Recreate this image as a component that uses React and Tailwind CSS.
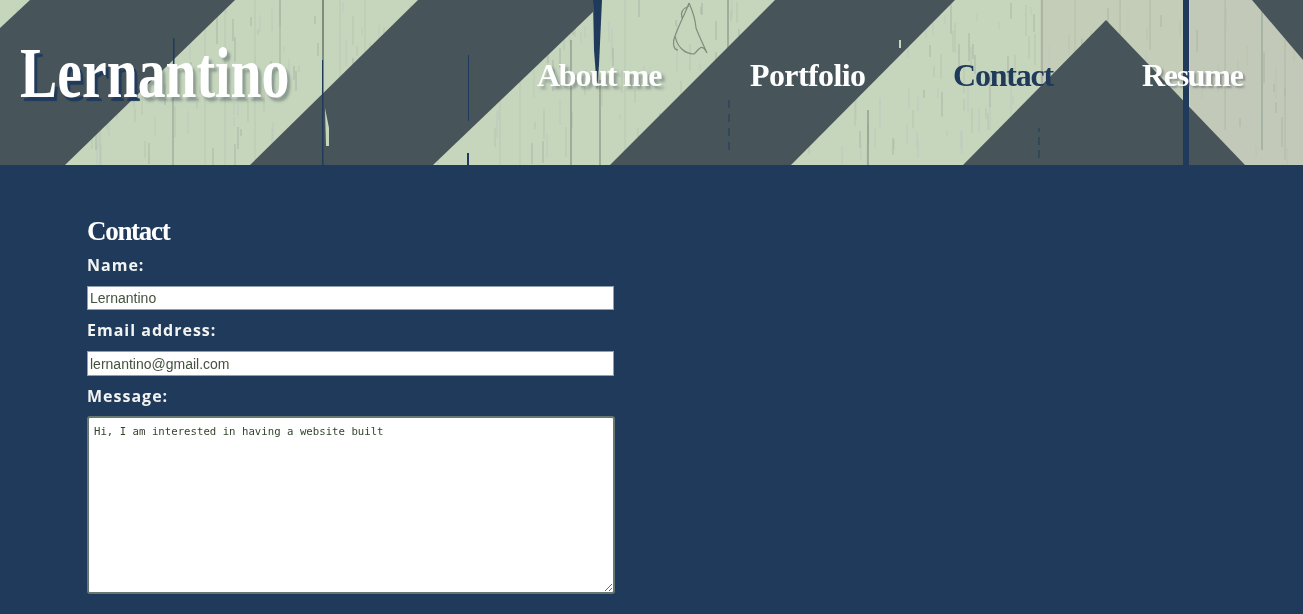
import React from "react";

const SERIF = "font-['Liberation_Serif',serif]";

function grain() {
  const out = [];
  let s = 17;
  const rnd = () => {
    s = (s * 9301 + 49297) % 233280;
    return s / 233280;
  };
  for (let i = 0; i < 420; i++) {
    const x = Math.round(rnd() * 1303);
    const y = Math.round(rnd() * 150);
    const h = 6 + Math.round(rnd() * 26);
    const tone = rnd();
    out.push([x, y, h, tone < 0.25 ? "#a9b6a5" : tone < 0.6 ? "#b8c4ad" : "#bcc9c0"]);
  }
  return out;
}

function Backdrop() {
  const planks = [
    [100,0,100,165,"#b4c2ab"],[173,0,173,165,"#8f9d90"],[205,0,205,165,"#bac8b1"],[225,0,225,165,"#bac8b1"],[255,0,255,165,"#bac8b1"],[280,0,280,70,"#a3b09c"],
    [340,0,340,90,"#bac8b1"],[365,0,365,70,"#bac8b1"],[500,90,500,165,"#bac8b1"],[520,60,520,165,"#bac8b1"],[571,40,571,165,"#76857a"],[600,80,600,165,"#76857a"],
    [625,0,625,165,"#bac8b1"],[728,0,728,50,"#76857a"],[868,110,868,165,"#76857a"],[1042,0,1042,85,"#8f9d90"],[1075,0,1075,60,"#b4c2ab"],[1120,0,1120,60,"#aeb8a6"],
    [1150,0,1150,50,"#aeb8a6"],[1225,0,1225,130,"#aeb8a6"],[1262,10,1262,150,"#8f9d90"],[1285,40,1285,160,"#aeb8a6"],
  ];
  return (
    <svg className="absolute inset-0 h-full w-full blur-[0.5px]" viewBox="0 0 1303 165" preserveAspectRatio="none" aria-hidden="true">
      <rect width="1303" height="165" fill="#c6d6bd" />
      <polygon points="1040,0 1185,0 1185,120 1106,20 1040,85" fill="#c4cdb8" />
      <polygon points="1190,0 1252,0 1303,60 1303,165 1245,165 1190,120" fill="#c3c9b8" />
      {grain().map(([x,y,h,c],i) => <line key={i} x1={x} y1={y} x2={x} y2={y+h} stroke={c} strokeWidth="1" />)}
      {planks.map(([a,b,c,d,s],i) => <line key={i} x1={a} y1={b} x2={c} y2={d} stroke={s} strokeWidth="1" />)}
      <path d="M689 3 C686 12 680 22 675 36 C677 46 684 54 694 54 C699 50 701 42 707 53 M675 36 C672 44 674 50 678 50 M689 3 C692 10 695 16 696 28 C699 36 703 44 707 53 M682 18 C680 12 684 8 689 6" fill="none" stroke="#7f8d7c" strokeWidth="1.2" />
      <polygon points="30,0 235,0 65,165 0,165 0,28" fill="#47555a" />
      <polygon points="418,0 593,0 593,12 433,165 250,165" fill="#47555a" />
      <polygon points="775,0 955,0 791,165 610,165" fill="#47555a" />
      <polygon points="1106,20 1245,165 963,165" fill="#47555a" />
      <polygon points="1252,0 1303,0 1303,60" fill="#47555a" />
      <path d="M593 0H602L599 65L597 90L594 50Z" fill="#203a5c" />
      <rect x="1183" y="0" width="6" height="165" fill="#203a5c" />
      <rect x="322" y="0" width="2" height="60" fill="#7f8d80" />
      <rect x="322" y="60" width="1.5" height="105" fill="#203a5c" />
      <rect x="173" y="38" width="1.5" height="30" fill="#203a5c" />
      <rect x="468" y="55" width="1" height="66" fill="#203a5c" />
      <rect x="467" y="153" width="2" height="12" fill="#203a5c" />
      <line x1="729" y1="100" x2="729" y2="153" stroke="#203a5c" strokeDasharray="8 6" />
      <line x1="1039" y1="158" x2="1039" y2="128" stroke="#203a5c" strokeDasharray="8 5" />
      <rect x="899" y="40" width="2" height="8" fill="#c6d6bd" />
      <path d="M325 108 L329 128 L329 146 L326 146 Z" fill="#c6d6bd" />
    </svg>
  );
}

function NavLink({ children, className }) {
  return (
    <a className={`${SERIF} absolute top-[55px] text-[32px] leading-[40px] font-bold whitespace-nowrap blur-[0.4px] ${className}`}>{children}</a>
  );
}

export default function App() {
  return (
    <div className="h-[614px] overflow-hidden bg-[#203a5c]">
      <header className="relative h-[165px] overflow-hidden">
        <Backdrop />
        <h1 className={`${SERIF} absolute left-[20px] top-[33px] text-[72px] leading-[80px] font-bold whitespace-nowrap text-white origin-left scale-x-[0.774] blur-[0.4px]`}>
          <span className="[text-shadow:4px_4px_1px_#203a5c]">Lern</span>
          <span className="[text-shadow:4px_4px_3px_rgba(71,85,90,0.45)]">antino</span>
        </h1>
        <nav>
          <NavLink className="left-[537px] tracking-[-1.25px] text-white [text-shadow:3px_3px_3px_rgba(71,85,90,0.45)]">About me</NavLink>
          <NavLink className="left-[750px] tracking-[-0.6px] text-white">Portfolio</NavLink>
          <NavLink className="left-[953px] tracking-[-1.2px] text-[#203a5c]">Contact</NavLink>
          <NavLink className="left-[1142px] tracking-[-1.3px] text-white [text-shadow:2px_2px_2px_rgba(71,85,90,0.45)]">Resume</NavLink>
        </nav>
      </header>
      <main className="pl-[87px] pt-[49px]">
        <h2 className={`${SERIF} text-[27px] leading-[34px] font-bold tracking-[-1.3px] text-white blur-[0.4px]`}>Contact</h2>
        <form className="flex w-[527px] flex-col font-['Open_Sans',sans-serif]">
          <label className="mt-[6px] text-base leading-[22px] font-bold tracking-[1px] text-[#f2f4f2] blur-[0.4px]">Name:</label>
          <input readOnly value="Lernantino" className="mt-[10px] h-[24px] w-full border border-[#8fa0ad] bg-white px-[2px] font-['Liberation_Sans',sans-serif] text-[14px] text-[#44533f] blur-[0.4px]" />
          <label className="mt-[9px] text-base leading-[22px] font-bold tracking-[1px] text-[#f2f4f2] blur-[0.4px]">Email address:</label>
          <input readOnly value="lernantino@gmail.com" className="mt-[10px] h-[25px] w-full border border-[#8fa0ad] bg-white px-[2px] font-['Liberation_Sans',sans-serif] text-[14px] text-[#44533f] blur-[0.4px]" />
          <label className="mt-[9px] text-base leading-[22px] font-bold tracking-[1px] text-[#f2f4f2] blur-[0.4px]">Message:</label>
          <textarea readOnly value="Hi, I am interested in having a website built" className="mt-[9px] h-[178px] w-[528px] rounded-[3px] border-2 border-[#66786f] bg-white px-[5px] py-[7px] font-['DejaVu_Sans_Mono',monospace] text-[10.7px] leading-[13px] text-[#33442f] blur-[0.4px]" />
        </form>
      </main>
    </div>
  );
}
